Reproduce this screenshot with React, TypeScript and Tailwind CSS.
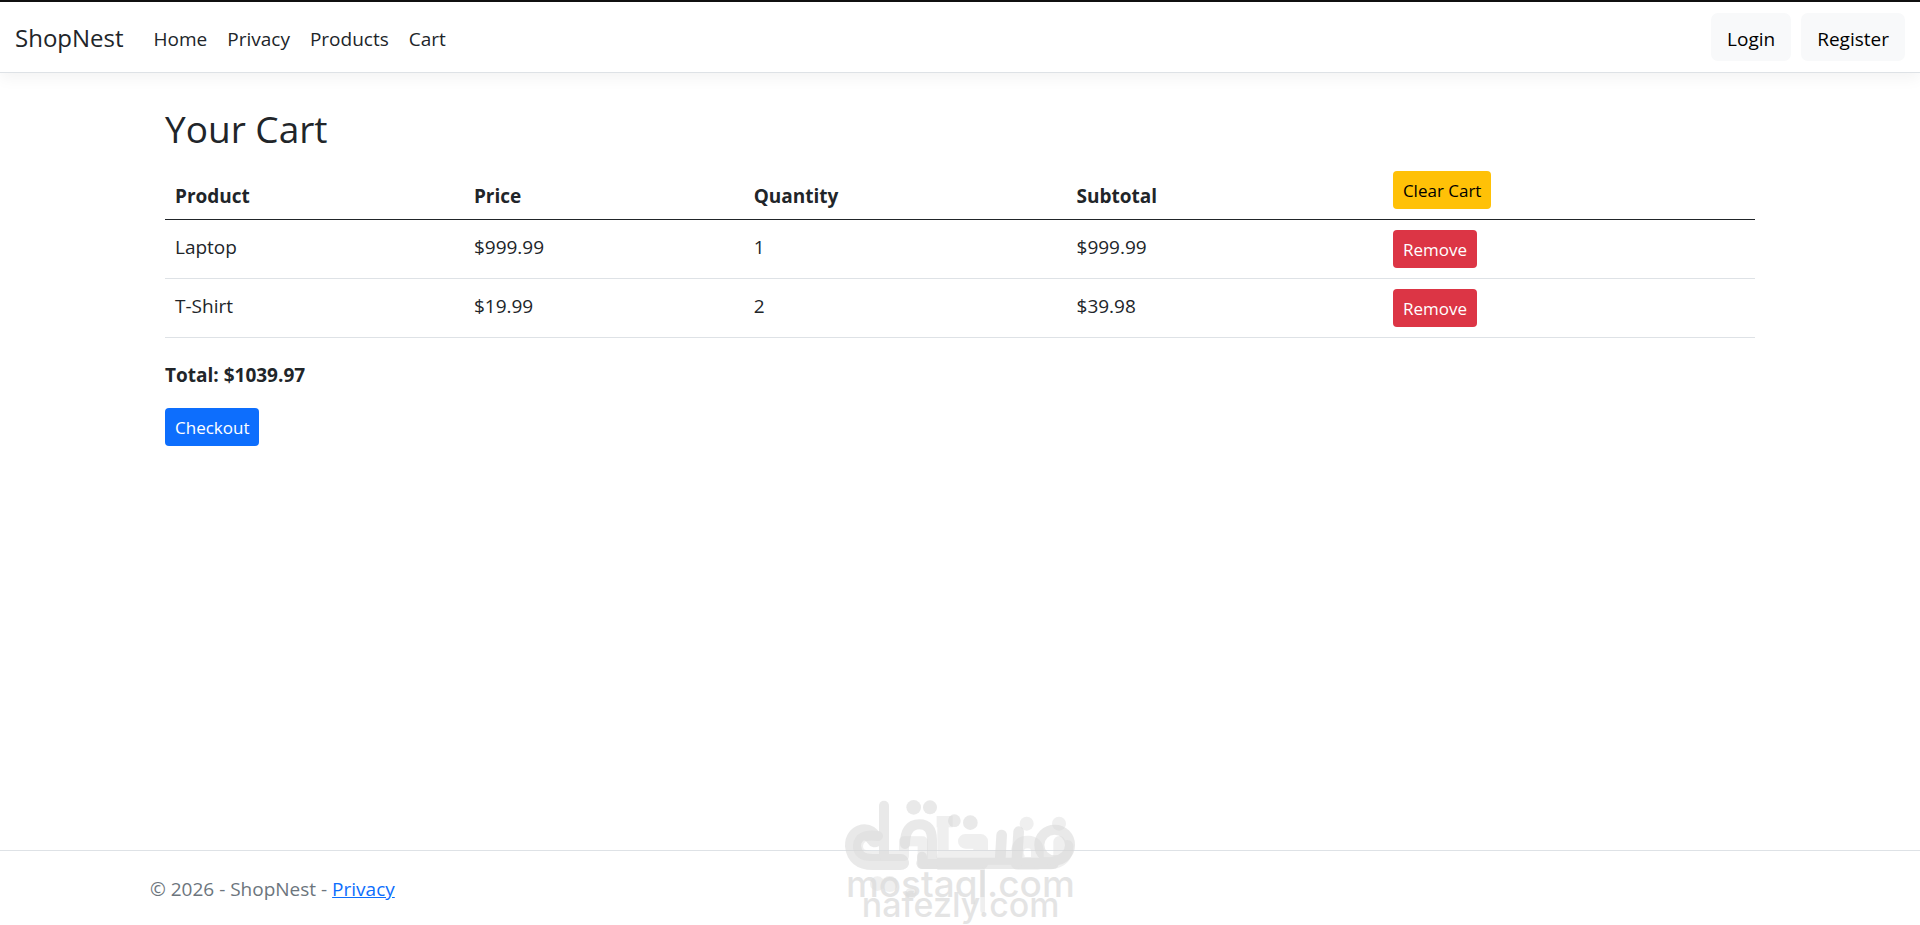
const links = ["Home", "Privacy", "Products", "Cart"]

const items = [
  { name: "Laptop", price: 999.99, quantity: 1 },
  { name: "T-Shirt", price: 19.99, quantity: 2 },
]

const smallButton = "block h-[38px] cursor-pointer rounded-[4px] px-[10px] text-[17px] leading-[40px]"

// two overlapping marks, each one flat tone so that only the overlap gets darker
function Watermark() {
  return (
    <svg
      className="pointer-events-none absolute bottom-0 left-1/2 h-[145px] w-[280px] -translate-x-1/2"
      viewBox="0 0 840 435"
      fill="none"
      strokeLinecap="round"
      strokeLinejoin="round"
    >
      <g opacity="0.55" stroke="#d8d8d8">
        <path strokeWidth="48" d="M164 178 Q150 154 128 157 Q99 166 99 198 Q104 246 158 246 H242" />
        <path strokeWidth="30" d="M192 77 V250" />
        <path strokeWidth="34" d="M192 250 H250 M306 250 H700" />
        <path strokeWidth="30" d="M306 252 V230 M255 192 Q255 133 298 133 Q336 133 336 180 V250" />
        <path strokeWidth="32" d="M545 165 L540 250 M596 155 L590 250" />
        <circle cx="704" cy="195" r="46" strokeWidth="30" />
        <g fill="#d8d8d8" stroke="none">
          <circle cx="281" cy="82" r="22" />
          <circle cx="330" cy="82" r="21" />
          <circle cx="403" cy="122" r="19" />
          <circle cx="451" cy="128" r="22" />
        </g>
      </g>
      <g opacity="0.4" stroke="#d8d8d8">
        <path strokeWidth="30" d="M174 168 Q118 160 114 196 Q112 230 160 228 H252 V184 H308 V252 H372" />
        <path strokeWidth="34" strokeLinecap="butt" d="M369 108 V270 M350 125 H398" />
        <path strokeWidth="44" d="M372 232 H592 M436 184 H482 V248 H372" />
        <path strokeWidth="38" d="M592 245 V216 Q594 186 624 186 Q652 186 652 216 V250 H592" />
        <path strokeWidth="36" d="M654 250 H692 Q742 244 742 198 M718 186 V240" />
        <g fill="#d8d8d8" stroke="none">
          <circle cx="620" cy="131" r="21" />
          <circle cx="717" cy="131" r="21" />
          <circle cx="172" cy="311" r="22" />
          <circle cx="209" cy="312" r="24" />
          <circle cx="273" cy="340" r="17" />
        </g>
        <path strokeWidth="14" d="M488 270 V392" />
      </g>
      <g fill="#dcdcdc" fillOpacity="0.75" textAnchor="middle" className="font-['Inter',sans-serif] font-medium">
        <text x="421" y="350" fontSize="111">mostaql.com</text>
        <text x="422" y="410" fontSize="102">nafezly.com</text>
      </g>
    </svg>
  )
}

export default function App() {
  const total = items.reduce((sum, item) => sum + item.price * item.quantity, 0)

  return (
    <div className="relative flex min-h-screen flex-col overflow-hidden bg-white font-['Open_Sans','Noto_Sans',sans-serif] text-[19px] leading-[30px] text-[#212529]">
      <header className="border-t-2 border-[#111111]">
        <nav className="flex items-center border-b border-[#dee2e6] px-[15px] py-[10px] shadow-[0_5px_15px_rgba(0,0,0,0.05)]">
          <a href="#" className="mr-[20px] pt-[2px] text-[24px] leading-[38px]">ShopNest</a>
          <ul className="flex grow">
            {links.map((link) => (
              <li key={link}>
                <a href="#" className="block px-[10px] pt-[12px] pb-[8px]">{link}</a>
              </li>
            ))}
          </ul>
          <div className="flex gap-[10px]">
            <a href="#" className="rounded-[7px] bg-[#f8f9fa] px-[16px] pt-[11px] pb-[7px] text-black">Login</a>
            <a href="#" className="rounded-[7px] bg-[#f8f9fa] px-[16px] pt-[11px] pb-[7px] text-black">Register</a>
          </div>
        </nav>
      </header>
      <main className="mx-auto w-full max-w-[1620px] grow px-[15px] pt-[32px]">
        <h1 className="mb-[8px] text-[37px] leading-[48px]">Your Cart</h1>
        <table className="w-full table-fixed border-collapse text-left">
          <thead>
            <tr className="border-b border-[#212529]">
              <th className="w-[18.8%] px-[10px] pb-[8px] align-bottom">Product</th>
              <th className="w-[17.6%] px-[10px] pb-[8px] align-bottom">Price</th>
              <th className="w-[20.3%] px-[10px] pb-[8px] align-bottom">Quantity</th>
              <th className="w-[19.9%] px-[10px] pb-[8px] align-bottom">Subtotal</th>
              <th className="px-[10px] py-[10px] align-bottom font-normal">
                <button className={`${smallButton} bg-[#ffc107] text-black`}>Clear Cart</button>
              </th>
            </tr>
          </thead>
          <tbody>
            {items.map((item) => (
              <tr key={item.name} className="border-b border-[#dee2e6]">
                <td className="px-[10px] pt-[12px] align-top">{item.name}</td>
                <td className="px-[10px] pt-[12px] align-top">${item.price}</td>
                <td className="px-[10px] pt-[12px] align-top">{item.quantity}</td>
                <td className="px-[10px] pt-[12px] align-top">${(item.price * item.quantity).toFixed(2)}</td>
                <td className="px-[10px] py-[10px] align-top">
                  <button className={`${smallButton} bg-[#dc3545] text-white`}>Remove</button>
                </td>
              </tr>
            ))}
          </tbody>
        </table>
        <p className="mt-[22px] mb-[18px] font-bold">Total: ${total.toFixed(2)}</p>
        <button className={`${smallButton} bg-[#0d6efd] text-white`}>Checkout</button>
      </main>
      <footer className="border-t border-[#dee2e6] text-[#6c757d]">
        <div className="mx-auto w-full max-w-[1620px] pt-[23px] pb-[21px]">
          &copy; 2026 - ShopNest - <a href="#" className="text-[#0d6efd] underline">Privacy</a>
        </div>
      </footer>
      <Watermark />
    </div>
  )
}
